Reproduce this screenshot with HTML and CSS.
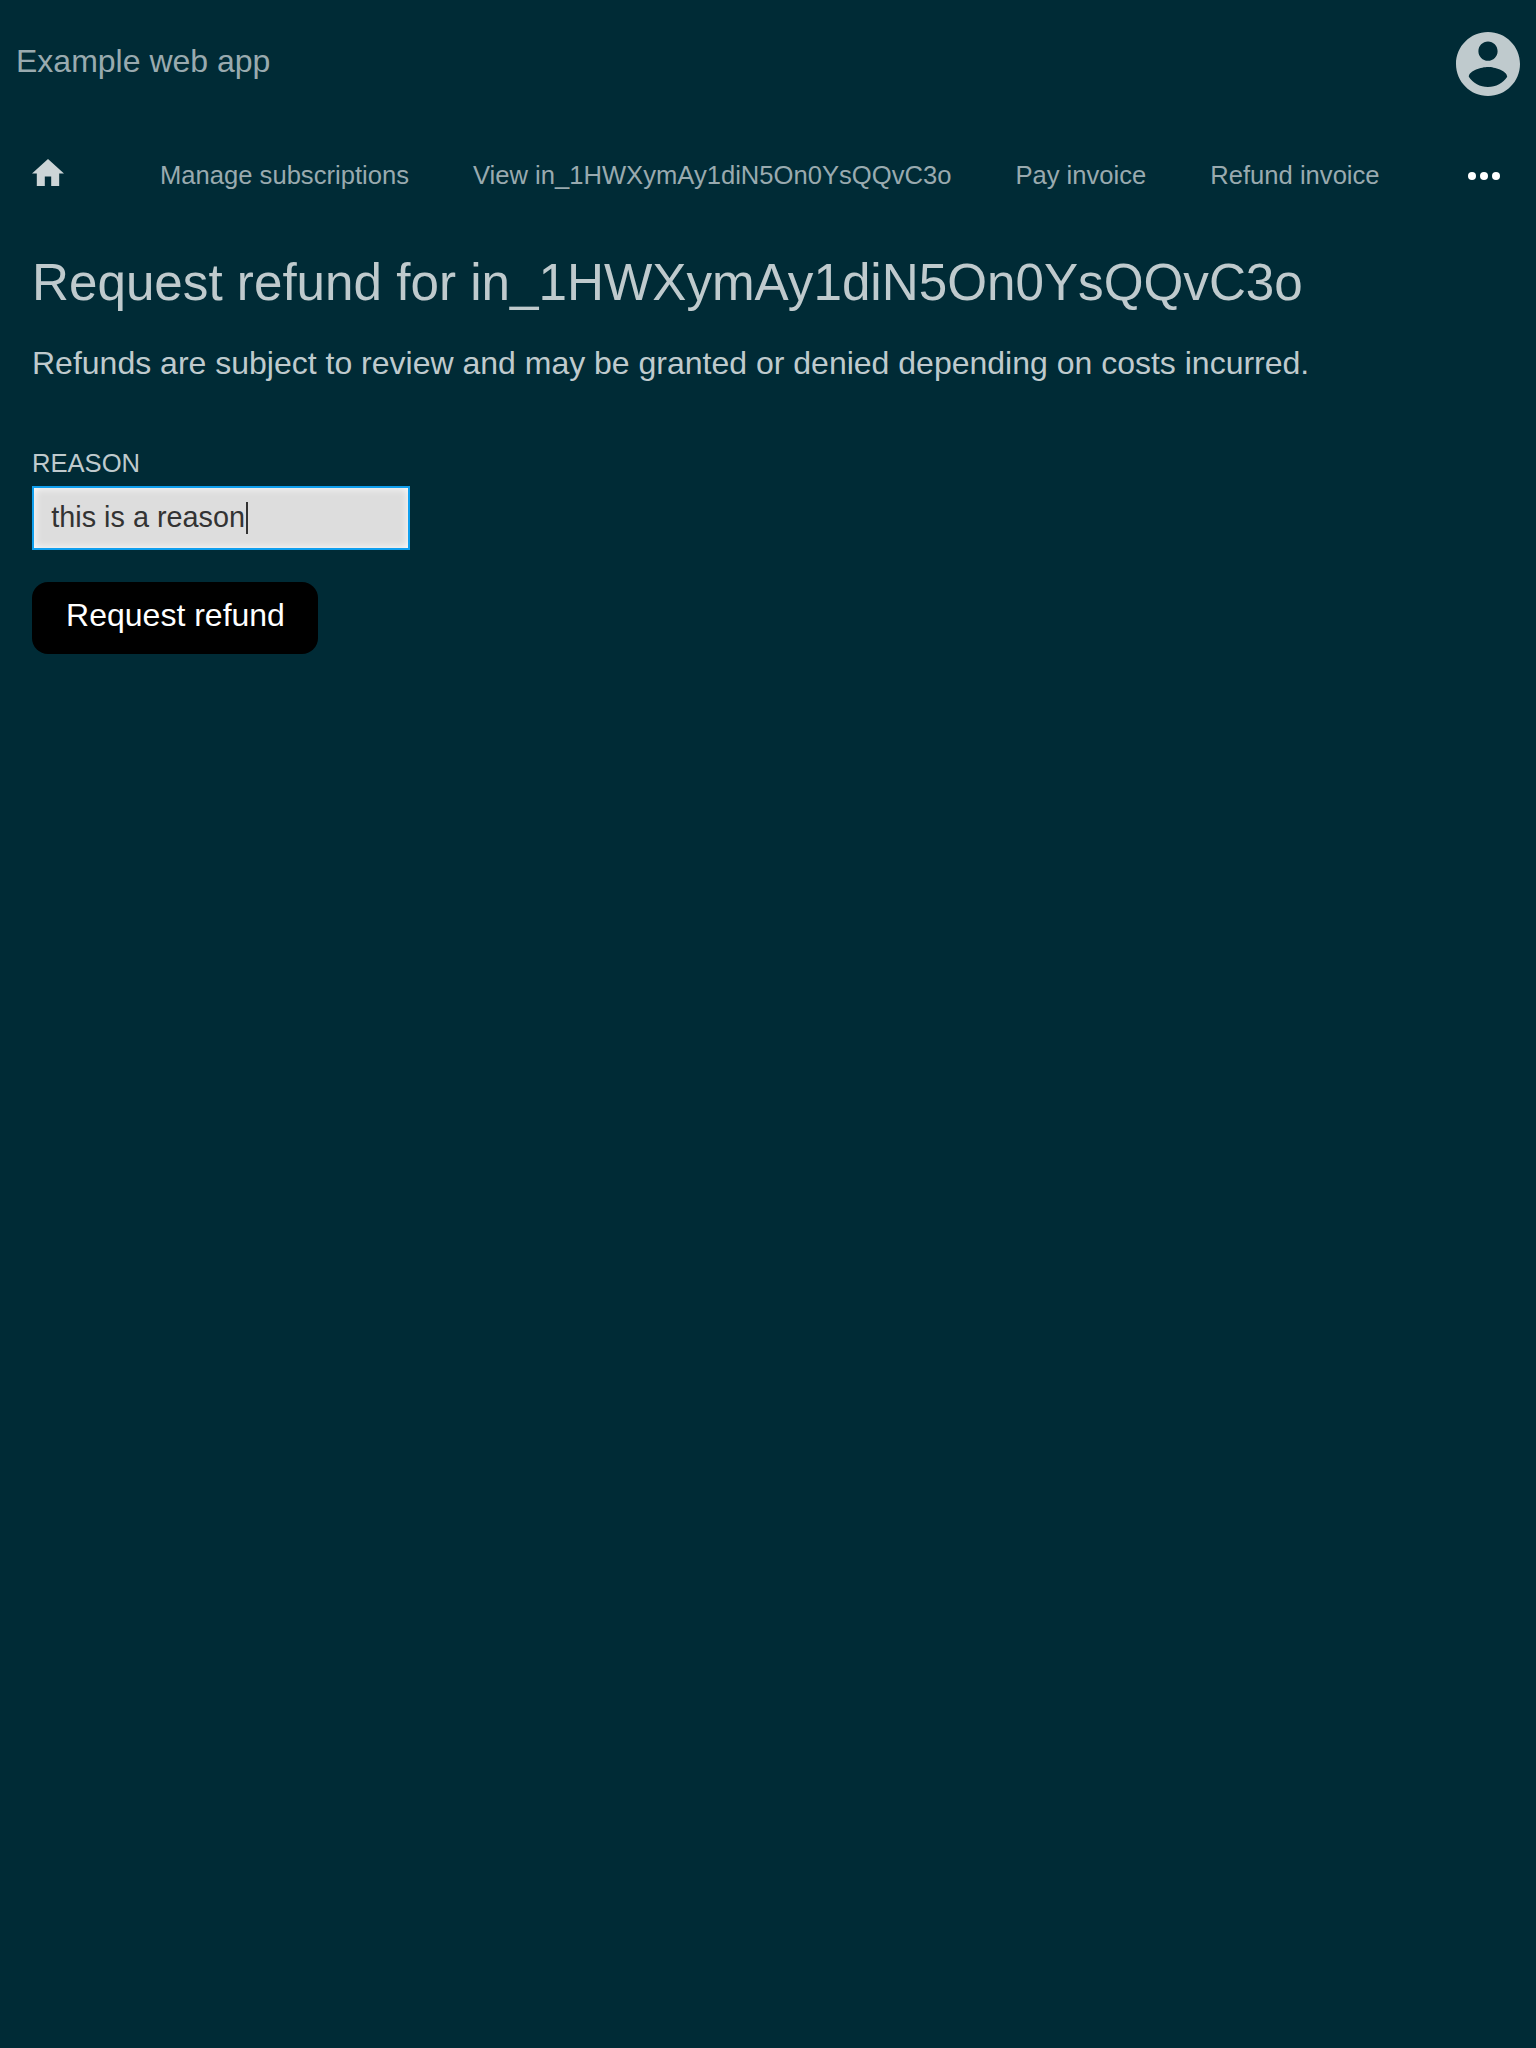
FILE: index.html
```html
<!DOCTYPE html>
<html lang="en">
<head>
<meta charset="utf-8">
<title>Request refund</title>
<link rel="stylesheet" href="styles.css">
</head>
<body>
<header class="header">
  <a class="brand">Example web app</a>
  <svg class="account" viewBox="2 2 20 20"><path d="M12 2C6.48 2 2 6.48 2 12s4.48 10 10 10 10-4.48 10-10S17.52 2 12 2zm0 3c1.66 0 3 1.34 3 3s-1.34 3-3 3-3-1.34-3-3 1.34-3 3-3zm0 14.2c-2.5 0-4.71-1.28-6-3.22.03-1.99 4-3.08 6-3.08 1.99 0 5.97 1.09 6 3.08-1.29 1.94-3.5 3.22-6 3.22z"/></svg>
</header>
<nav class="nav">
  <svg class="home" viewBox="2 3 20 17"><path d="M10 20v-6h4v6h5v-8h3L12 3 2 12h3v8z"/></svg>
  <div class="links">
    <a>Manage subscriptions</a>
    <a>View in_1HWXymAy1diN5On0YsQQvC3o</a>
    <a>Pay invoice</a>
    <a>Refund invoice</a>
  </div>
  <svg class="more" viewBox="0 0 32 8"><circle cx="4" cy="4" r="4"/><circle cx="16" cy="4" r="4"/><circle cx="28" cy="4" r="4"/></svg>
</nav>
<main class="content">
  <h1>Request refund for in_1HWXymAy1diN5On0YsQQvC3o</h1>
  <p>Refunds are subject to review and may be granted or denied depending on costs incurred.</p>
  <div class="form">
    <div class="label">Reason</div>
    <div class="field"><span>this is a reason</span><i class="caret"></i></div>
    <button class="submit" type="button">Request refund</button>
  </div>
</main>
</body>
</html>
```
FILE: styles.css
```css
* { box-sizing: border-box; }
body {
  margin: 0;
  min-height: 2048px;
  background: #002b36;
  color: #bfcacd;
  font: 32px/40px "Liberation Sans", Arial, sans-serif;
}
.header {
  display: flex;
  justify-content: space-between;
  height: 128px;
  padding: 32px 16px;
}
.brand { padding-top: 9px; color: #99aaaf; }
.account { width: 64px; height: 64px; fill: #bfcacd; }
.nav {
  display: flex;
  align-items: flex-start;
  height: 96px;
  padding: 31px 36px 0 32px;
}
.home { width: 32px; height: 27.2px; fill: #ccd5d7; }
.links {
  display: flex;
  gap: 64px;
  margin-left: 96px;
  font-size: 25.6px;
  line-height: 32px;
  color: #99aaaf;
  white-space: nowrap;
}
.more { width: 32px; height: 8px; margin: 13px 0 0 auto; fill: #fff; }
.content { padding: 29px 32px 0; }
h1 { margin: 0; font-size: 51.2px; line-height: 60px; font-weight: 400; }
p { margin: 30px 0 0; }
.form {
  display: flex;
  flex-direction: column;
  align-items: flex-start;
  padding-top: 64px;
}
.label { height: 39px; font-size: 25.6px; line-height: 32px; text-transform: uppercase; }
.field {
  display: flex;
  align-items: center;
  width: 378px;
  height: 64px;
  padding: 0 0 2px 17.28px;
  border: 2px solid #109fee;
  background: #ddd;
  box-shadow: inset 0 0 8px #fff;
  color: #333;
  font-size: 28.8px;
  line-height: 32px;
}
.caret { position: relative; top: 1px; width: 2px; height: 32px; margin-left: 1px; background: #333; }
.submit {
  width: 286px;
  height: 72px;
  margin-top: 32px;
  padding: 0 0 6px 1px;
  border: 0;
  border-radius: 16px;
  background: #000;
  color: #fff;
  font: inherit;
}
```
